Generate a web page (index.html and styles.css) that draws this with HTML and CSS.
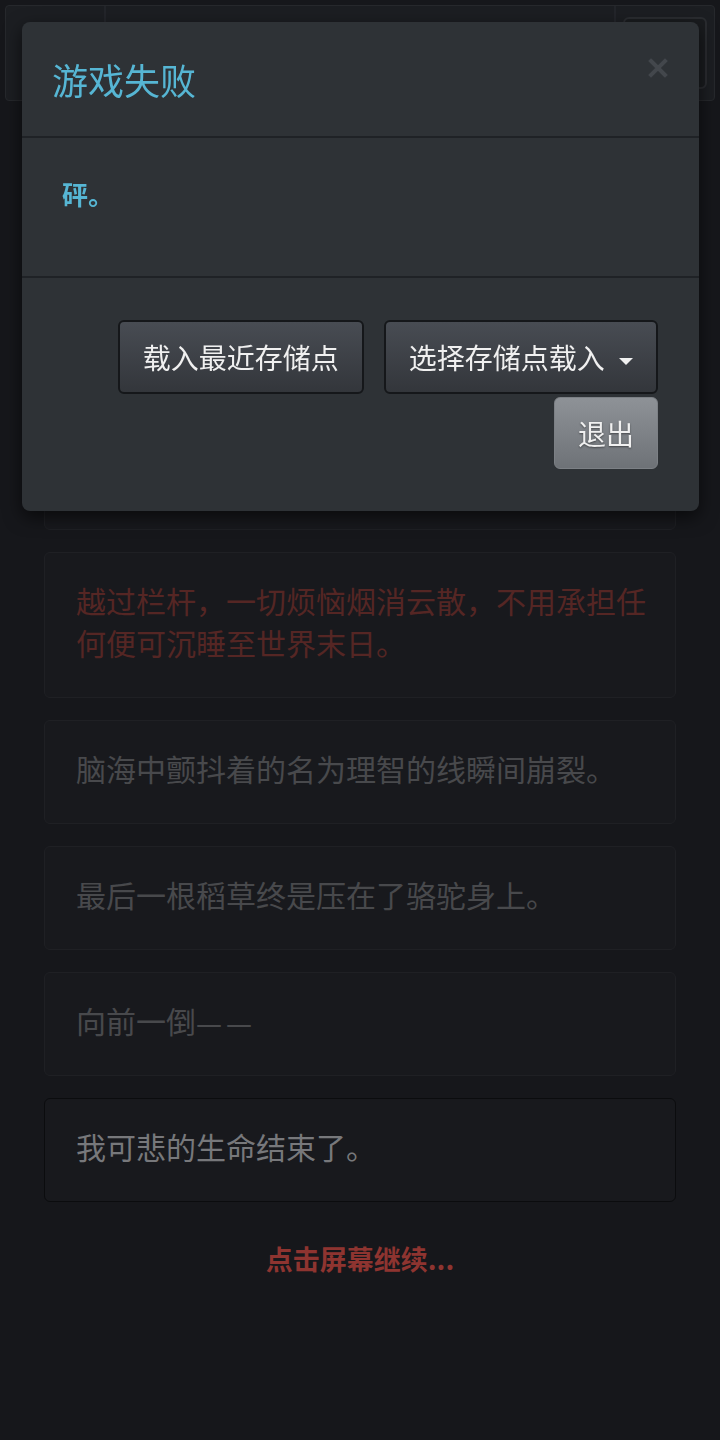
FILE: index.html
```html
<!DOCTYPE html>
<html lang="zh-CN">
<head>
    <meta charset="UTF-8">
    <meta name="viewport" content="width=device-width, initial-scale=1.0">
    <title>游戏失败</title>
    <link rel="stylesheet" href="styles.css">
</head>
<body>
    <!-- Top bar (behind the dialog) -->
    <div class="navbar">
        <div class="nav-left"></div>
        <div class="nav-middle"></div>
        <div class="nav-right">
            <span class="nav-btn"></span>
        </div>
    </div>

    <!-- Story log -->
    <div class="story">
        <div class="card card-first">
            <p>你站在天台的边缘，风从身后吹来。</p>
            <p>城市的灯光在脚下缓缓流动。</p>
        </div>
        <div class="card">
            <p class="text-red">越过栏杆，一切烦恼烟消云散，不用承担任何便可沉睡至世界末日。</p>
        </div>
        <div class="card">
            <p>脑海中颤抖着的名为理智的线瞬间崩裂。</p>
        </div>
        <div class="card">
            <p>最后一根稻草终是压在了骆驼身上。</p>
        </div>
        <div class="card">
            <p>向前一倒<span class="dash">——</span></p>
        </div>
        <div class="card card-current">
            <p>我可悲的生命结束了。</p>
        </div>

        <div class="continue">点击屏幕继续...</div>
    </div>

    <!-- Game over dialog -->
    <div class="modal">
        <div class="modal-header">
            <h4 class="modal-title">游戏失败</h4>
            <button class="close" aria-label="关闭">
                <svg width="20" height="20" viewBox="0 0 20 20">
                    <path d="M3 3 L17 17 M17 3 L3 17" stroke="#43474c" stroke-width="4" stroke-linecap="square"/>
                </svg>
            </button>
        </div>
        <div class="modal-body">
            <p class="death-text">砰。</p>
        </div>
        <div class="modal-footer">
            <button class="btn btn-dark">载入最近存储点</button>
            <button class="btn btn-dark">选择存储点载入 <span class="caret"></span></button>
            <button class="btn btn-grey">退出</button>
        </div>
    </div>
</body>
</html>
```

FILE: styles.css
```css
body {
    margin: 0;
    background-color: #16171b;
    font-family: "Noto Sans CJK SC", "Noto Sans", sans-serif;
    color: #48494c;
}
p {
    margin: 0;
}

/* top bar */
.navbar {
    display: flex;
    height: 96px;
    margin: 5px 5px 0;
    background-color: #1c1e22;
    border: 1px solid #26282c;
    border-radius: 4px;
    box-sizing: border-box;
}
.nav-left {
    width: 98px;
    border-right: 2px solid #23252a;
}
.nav-middle {
    flex: 1;
    border-right: 2px solid #23252a;
}
.nav-right {
    width: 98px;
    display: flex;
    align-items: center;
    justify-content: center;
}
.nav-btn {
    width: 80px;
    height: 68px;
    border: 2px solid #2a2c30;
    border-radius: 6px;
    background-color: #1a1c1f;
}

/* story cards */
.story {
    display: flex;
    flex-direction: column;
    gap: 22px;
    padding: 21px 44px 0;
}
.card {
    background-color: #18191d;
    border: 1px solid #1f2024;
    border-radius: 6px;
    padding: 26px 28px 34px 31px;
    font-size: 30px;
    line-height: 42px;
}
.card-first {
    min-height: 408px;
    box-sizing: border-box;
}
.card-current {
    border-color: #0b0c0e;
    color: #77787b;
}
.text-red {
    color: #552624;
}
.dash {
    font-family: "DejaVu Sans", sans-serif;
    font-size: 26px;
    line-height: 0;
    letter-spacing: 4px;
}
.continue {
    margin-top: 15px;
    text-align: center;
    font-size: 27px;
    font-weight: bold;
    color: #8e3430;
}

/* dialog */
.modal {
    position: fixed;
    top: 22px;
    left: 22px;
    width: 677px;
    background-color: #2e3236;
    border-radius: 8px;
    box-shadow: 0 6px 18px rgba(0, 0, 0, 0.6);
}
.modal-header {
    display: flex;
    justify-content: space-between;
    align-items: center;
    height: 114px;
    padding: 0 31px 0 30px;
    border-bottom: 2px solid #1f2226;
}
.modal-title {
    margin: 0;
    font-size: 36px;
    font-weight: normal;
    color: #56b6d4;
}
.close {
    align-self: flex-start;
    margin-top: 36px;
    padding: 0;
    border: none;
    background: none;
}
.close svg {
    display: block;
}
.modal-body {
    padding: 38px 40px 64px;
    border-bottom: 2px solid #1f2226;
}
.death-text {
    font-size: 26px;
    font-weight: bold;
    line-height: 36px;
    color: #56b6d4;
}
.modal-footer {
    display: flex;
    flex-wrap: wrap;
    justify-content: flex-end;
    gap: 3px 20px;
    padding: 42px 41px 42px;
}
.btn {
    height: 74px;
    padding: 0 23px;
    font-family: "Noto Sans CJK SC", "Noto Sans", sans-serif;
    font-size: 28px;
    color: #f0f0f0;
    border-radius: 6px;
    cursor: pointer;
}
.btn-dark {
    background: linear-gradient(#484c53, #33363b);
    border: 2px solid #15171a;
}
.btn-grey {
    height: 72px;
    background: linear-gradient(#8e9297, #6e7277);
    border: 1px solid #7c8085;
    text-shadow: 0 1px 2px rgba(0, 0, 0, 0.45);
}
.caret {
    display: inline-block;
    margin-left: 8px;
    vertical-align: middle;
    border-top: 7px solid #f0f0f0;
    border-left: 7px solid transparent;
    border-right: 7px solid transparent;
}
```
